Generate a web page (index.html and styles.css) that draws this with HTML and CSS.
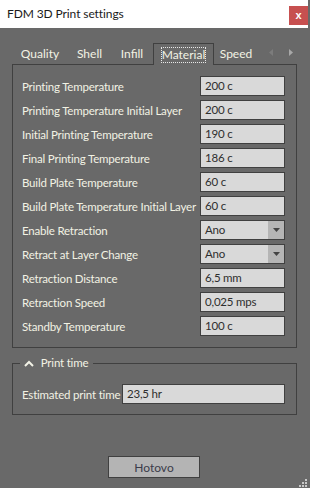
FILE: index.html
```html
<!DOCTYPE html>
<html lang="en">
<head>
  <meta charset="UTF-8" />
  <title>FDM 3D Print settings</title>
  <link rel="stylesheet" href="styles.css">
</head>
<body>
  <div class="window">
    <header class="titlebar">
      <span class="title">FDM 3D Print settings</span>
      <button class="close-btn">x</button>
    </header>

    <main class="content">
      <nav class="tabs">
        <span class="tab tab-quality">Quality</span>
        <span class="tab tab-shell">Shell</span>
        <span class="tab tab-infill">Infill</span>
        <span class="tab tab-material active"><span class="focus">Material</span></span>
        <span class="tab tab-speed">Speed</span>
        <span class="tab-scroll">
          <svg width="4" height="7" viewBox="0 0 4 7"><path d="M4 0 L0 3.5 L4 7 Z" fill="#7c7c7c"/></svg>
          <svg width="4" height="7" viewBox="0 0 4 7"><path d="M0 0 L4 3.5 L0 7 Z" fill="#a8a8a8"/></svg>
        </span>
      </nav>

      <section class="pane">
        <div class="row"><span class="label">Printing Temperature</span><span class="field">200 c</span></div>
        <div class="row"><span class="label">Printing Temperature Initial Layer</span><span class="field">200 c</span></div>
        <div class="row"><span class="label">Initial Printing Temperature</span><span class="field">190 c</span></div>
        <div class="row"><span class="label">Final Printing Temperature</span><span class="field">186 c</span></div>
        <div class="row"><span class="label">Build Plate Temperature</span><span class="field">60 c</span></div>
        <div class="row"><span class="label">Build Plate Temperature Initial Layer</span><span class="field">60 c</span></div>
        <div class="row">
          <span class="label">Enable Retraction</span>
          <span class="field combo">Ano<span class="combo-btn"><svg width="7" height="4" viewBox="0 0 7 4"><path d="M0 0 H7 L3.5 4 Z" fill="#444"/></svg></span></span>
        </div>
        <div class="row">
          <span class="label">Retract at Layer Change</span>
          <span class="field combo">Ano<span class="combo-btn"><svg width="7" height="4" viewBox="0 0 7 4"><path d="M0 0 H7 L3.5 4 Z" fill="#444"/></svg></span></span>
        </div>
        <div class="row"><span class="label">Retraction Distance</span><span class="field">6,5 mm</span></div>
        <div class="row"><span class="label">Retraction Speed</span><span class="field">0,025 mps</span></div>
        <div class="row"><span class="label">Standby Temperature</span><span class="field">100 c</span></div>
      </section>

      <fieldset class="group">
        <legend>
          <svg class="chevron" width="10" height="7" viewBox="0 0 10 7"><path d="M1 6 L5 2 L9 6" fill="none" stroke="#f2f2e6" stroke-width="2"/></svg>
          Print time
        </legend>
        <div class="row row-wide"><span class="label">Estimated print time</span><span class="field">23,5 hr</span></div>
      </fieldset>

      <footer class="actions">
        <button class="done-btn">Hotovo</button>
      </footer>
    </main>

    <svg class="grip" width="8" height="8" viewBox="0 0 8 8">
      <rect x="6" y="0" width="2" height="2" fill="#c8c8c8"/>
      <rect x="3" y="3" width="2" height="2" fill="#c8c8c8"/>
      <rect x="6" y="3" width="2" height="2" fill="#c8c8c8"/>
      <rect x="0" y="6" width="2" height="2" fill="#c8c8c8"/>
      <rect x="3" y="6" width="2" height="2" fill="#c8c8c8"/>
      <rect x="6" y="6" width="2" height="2" fill="#c8c8c8"/>
    </svg>
  </div>
</body>
</html>
```

FILE: styles.css
```css
:root {
  --bg: #696969;
  --border: #404040;
  --text: #f2f2e4;
  --field-bg: #d9d9d9;
  --field-text: #2e2e2e;
}

* {
  box-sizing: border-box;
  margin: 0;
  padding: 0;
}

body {
  background: var(--bg);
  font-family: 'Lato', 'Liberation Sans', sans-serif;
  font-size: 11.5px;
  letter-spacing: -0.2px;
  color: var(--text);
}

.window {
  position: relative;
  width: 308px;
  height: 488px;
  background: var(--bg);
}

.titlebar {
  height: 28px;
  background: #ffffff;
  display: flex;
  justify-content: space-between;
  align-items: flex-start;
}

.title {
  color: #1a1a1a;
  font-size: 12px;
  letter-spacing: -0.1px;
  line-height: 28px;
  padding-left: 7px;
}

.close-btn {
  margin-top: 6px;
  width: 19px;
  height: 19px;
  border: none;
  background: #c75050;
  color: #ffffff;
  font-family: 'Liberation Sans', sans-serif;
  font-weight: bold;
  font-size: 11px;
  line-height: 17px;
}

.content {
  padding: 15px 12px 0 12px;
}

/* tabs */
.tabs {
  display: flex;
  height: 21px;
  align-items: stretch;
}

.tab {
  display: flex;
  align-items: center;
  justify-content: center;
  height: 21px;
  font-size: 12px;
  letter-spacing: 0;
}

.tab-quality { width: 56px; }
.tab-shell { width: 43px; }
.tab-infill { width: 42px; }
.tab-material { width: 61px; }
.tab-speed { width: 44px; }

.tab.active {
  position: relative;
  z-index: 1;
  height: 22px;
  border: 1px solid var(--border);
  border-bottom: none;
  background: var(--bg);
}

.focus {
  border: 1px dotted #e8e8e8;
  padding: 0 0 1px 0;
  line-height: 13px;
}

.tab-scroll {
  display: flex;
  align-items: center;
  gap: 16px;
  padding-left: 11px;
  padding-bottom: 2px;
}

/* material pane */
.pane {
  width: 285px;
  border: 1px solid var(--border);
  padding: 11px 11px 11px 9px;
  display: flex;
  flex-direction: column;
  gap: 4px;
}

.row {
  display: grid;
  grid-template-columns: minmax(0, 1fr) 85px;
  align-items: center;
  height: 20px;
}

.row-wide {
  grid-template-columns: minmax(0, 1fr) 163px;
}

.label {
  white-space: nowrap;
}

.field {
  height: 20px;
  background: var(--field-bg);
  border: 1px solid var(--border);
  color: var(--field-text);
  line-height: 18px;
  padding-left: 4px;
}

.combo {
  display: flex;
  justify-content: space-between;
}

.combo-btn {
  width: 16px;
  background: #b5b5b5;
  display: flex;
  align-items: center;
  justify-content: center;
}

/* print time group */
.group {
  width: 285px;
  margin-top: 7px;
  border: 1px solid var(--border);
  padding: 13px 11px 10px 9px;
}

.group legend {
  margin-left: -2px;
  padding: 0 5px 0 4px;
  line-height: 16px;
}

.chevron {
  margin-right: 4px;
  vertical-align: 0;
}

.actions {
  display: flex;
  justify-content: center;
  margin-top: 41px;
}

.done-btn {
  width: 92px;
  height: 22px;
  background: #b4b4b4;
  border: 1px solid var(--border);
  color: #3c3c4a;
  font-family: 'Lato', 'Liberation Sans', sans-serif;
  font-size: 12px;
}

.grip {
  position: absolute;
  right: 1px;
  bottom: 1px;
}
```
